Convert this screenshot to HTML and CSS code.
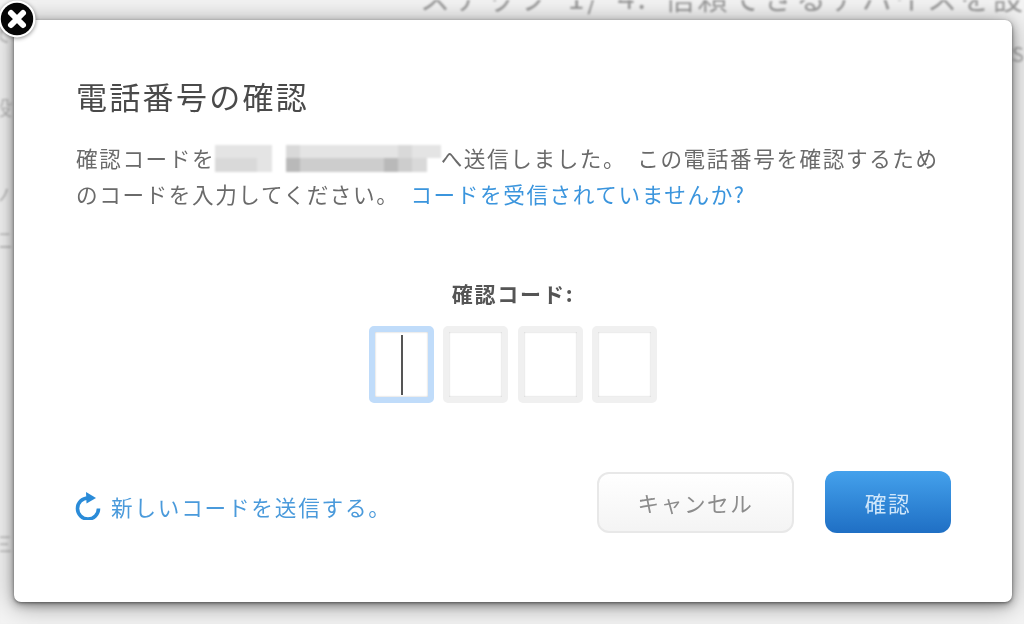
FILE: index.html
```html
<!DOCTYPE html>
<html lang="ja">
<head>
<meta charset="utf-8">
<title>電話番号の確認</title>
<link rel="stylesheet" href="styles.css">
</head>
<body>
<div class="backdrop">
  <div class="page-title">ステップ 1/ 4: 信頼できるデバイスを設定</div>
  <div class="side-left">
    <span class="frag frag-a">て</span>
    <span class="frag frag-b">設</span>
    <span class="frag frag-c">ノ</span>
    <span class="frag frag-d">二</span>
    <span class="frag frag-e">三</span>
  </div>
  <div class="side-right">SMS</div>
</div>

<div class="modal">
  <h1 class="title">電話番号の確認</h1>
  <p class="message">確認コードを<span class="redact"><i class="c1"></i><i class="c1"></i><i class="c1"></i><i class="c1"></i><i class="c0"></i><i class="c2"></i><i class="c1"></i><i class="c1"></i><i class="c1"></i><i class="c1"></i><i class="c1"></i><i class="c1"></i><i class="c1"></i><i class="c2"></i><i class="c1"></i><i class="c1"></i><i class="c2"></i><i class="c2"></i><i class="c2"></i><i class="c1"></i><i class="c0"></i><i class="c4"></i><i class="c3"></i><i class="c3"></i><i class="c3"></i><i class="c3"></i><i class="c3"></i><i class="c3"></i><i class="c4"></i><i class="c3"></i><i class="c2"></i><i class="c0"></i></span>へ送信しました。<span class="gap"></span>この電話番号を確認するためのコードを入力してください。<span class="gap"></span><a class="link" href="#">コードを受信されていませんか?</a></p>

  <div class="code-block">
    <div class="code-label">確認コード:</div>
    <div class="code-inputs">
      <div class="code-box code-box-active"><span class="caret"></span></div>
      <div class="code-box"></div>
      <div class="code-box"></div>
      <div class="code-box"></div>
    </div>
  </div>

  <div class="footer">
    <a class="resend" href="#">
      <svg class="resend-icon" width="26" height="28" viewBox="0 0 26 28" aria-hidden="true">
        <path d="M13 6A10.5 10.5 0 1 0 23.5 16.5" fill="none" stroke="#2a8bd8" stroke-width="3.6"/>
        <path d="M11 0L21 6L11.5 11.5Z" fill="#2a8bd8"/>
      </svg>
      <span>新しいコードを送信する。</span>
    </a>
    <div class="actions">
      <button class="btn btn-cancel" type="button">キャンセル</button>
      <button class="btn btn-confirm" type="button">確認</button>
    </div>
  </div>

  <button class="close" type="button" aria-label="閉じる">
    <svg width="38" height="38" viewBox="0 0 38 38" aria-hidden="true">
      <circle cx="19" cy="19" r="18.5" fill="#fff"/>
      <circle cx="19" cy="19" r="16.2" fill="#060606"/>
      <path d="M13 13L25 25M25 13L13 25" stroke="#fff" stroke-width="6" stroke-linecap="round"/>
    </svg>
  </button>
</div>
</body>
</html>
```

FILE: styles.css
```css
* { box-sizing: border-box; }

html, body {
  margin: 0;
  width: 1024px;
  height: 624px;
  overflow: hidden;
}

body {
  position: relative;
  background: #f1f1f1;
  font-family: "Noto Sans CJK JP", "Noto Sans", sans-serif;
  color: #666;
}

.backdrop {
  height: 624px;
  overflow: hidden;
  background: #f4f4f4;
  filter: blur(0.9px);
}

.page-title {
  margin: -24px 0 0 420px;
  font-size: 30px;
  line-height: 40px;
  letter-spacing: 3px;
  word-spacing: 6px;
  color: #999;
  white-space: nowrap;
}

.side-left {
  display: flex;
  flex-direction: column;
  align-items: flex-start;
  margin: 6px 0 0 -8px;
  font-size: 20px;
  line-height: 24px;
  color: #bbb;
}

.frag-b { margin-top: 50px; }
.frag-c { margin-top: 64px; }
.frag-d { margin-top: 20px; }
.frag-e { margin-top: 280px; }

.side-right {
  position: absolute;
  top: 42px;
  left: 1012px;
  font-size: 20px;
  line-height: 24px;
  color: #aaa;
}

.modal {
  position: absolute;
  left: 14px;
  top: 20px;
  width: 998px;
  height: 582px;
  padding: 54px 62px 0;
  background: #fff;
  border-radius: 7px;
  box-shadow: 0 1px 3px rgba(0, 0, 0, .4), 0 3px 9px rgba(0, 0, 0, .32), 0 3px 26px rgba(0, 0, 0, .4);
}

.title {
  margin: 0;
  font-size: 31px;
  line-height: 44px;
  font-weight: 400;
  letter-spacing: 2.3px;
  color: #4a4a4a;
  filter: blur(0.5px);
}

.message {
  width: 880px;
  margin: 22px 0 0;
  font-size: 21.6px;
  line-height: 36px;
  letter-spacing: 1.6px;
  color: #6a6a6a;
  filter: blur(0.5px);
}

.redact {
  display: inline-grid;
  grid-template-columns: repeat(16, 14.1px);
  grid-template-rows: 13.5px 13.5px;
  margin: -10px 0;
  vertical-align: 9px;
  letter-spacing: 0;
  filter: blur(.8px);
}

.c0 { background: #fff; }
.c1 { background: #e4e4e4; }
.c2 { background: #d9d9d9; }
.c3 { background: #cdcdcd; }
.c4 { background: #b9b9b9; }

.gap {
  display: inline-block;
  width: 11px;
}

.link {
  color: #3b95dd;
  text-decoration: none;
}

.code-block {
  display: flex;
  flex-direction: column;
  align-items: center;
  margin-top: 66px;
}

.code-label {
  font-size: 21px;
  line-height: 30px;
  font-weight: 700;
  letter-spacing: 1.8px;
  color: #555;
  filter: blur(0.5px);
}

.code-inputs {
  display: flex;
  gap: 9.3px;
  margin-top: 18px;
}

.code-box {
  display: flex;
  align-items: center;
  justify-content: center;
  width: 65px;
  height: 77px;
  background: #fff;
  border: 6px solid #f0f0f0;
  border-radius: 5px;
  box-shadow: inset 0 0 2px #bbb;
  filter: blur(0.7px);
}

.code-box-active {
  border-color: #c0dcfa;
}

.caret {
  width: 2px;
  height: 60px;
  background: #555;
}

.footer {
  display: flex;
  justify-content: space-between;
  align-items: center;
  width: 876px;
  margin: 68px 0 0 -1px;
}

.resend {
  display: flex;
  align-items: center;
  gap: 10px;
  margin-top: 8px;
  font-size: 21.6px;
  letter-spacing: 1.8px;
  color: #4a9adb;
  text-decoration: none;
  filter: blur(0.5px);
}

.resend-icon {
  display: block;
}

.actions {
  display: flex;
  align-items: flex-end;
  gap: 31px;
}

.btn {
  padding: 0;
  font: inherit;
  font-size: 21.6px;
  letter-spacing: 1.6px;
  border-radius: 12px;
  filter: blur(0.5px);
}

.btn-cancel {
  width: 197px;
  height: 61px;
  color: #8c8c8c;
  background: linear-gradient(#fff, #f4f4f4);
  border: 2px solid #e8e8e8;
}

.btn-confirm {
  width: 126px;
  height: 62px;
  color: #cfe6fa;
  background: linear-gradient(#44a1ec, #1f6fc4);
  border: 0;
}

.close {
  position: absolute;
  left: -16px;
  top: -20px;
  width: 38px;
  height: 38px;
  padding: 0;
  background: none;
  border: 0;
  filter: drop-shadow(0 1px 2px rgba(0, 0, 0, .45));
}

.close svg {
  display: block;
}
```
